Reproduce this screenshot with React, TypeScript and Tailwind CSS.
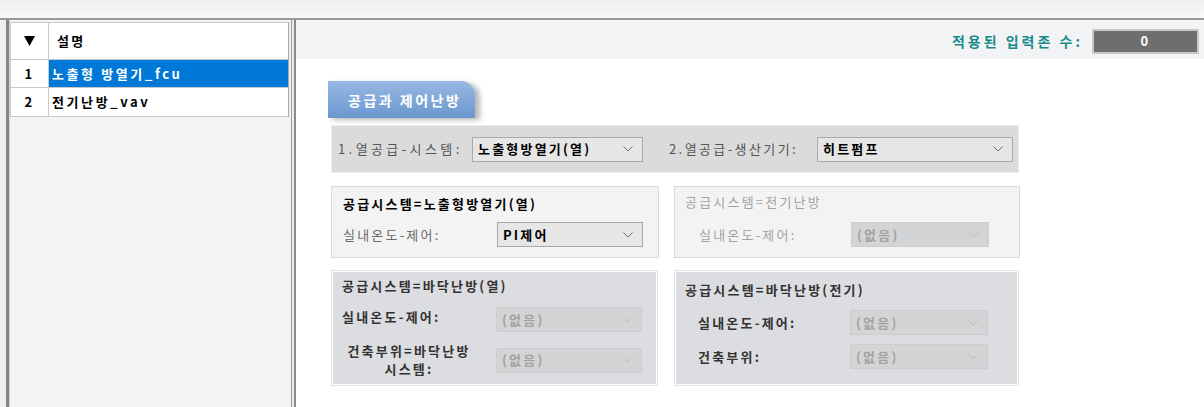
import clsx from 'clsx';

function Chevron({ disabled }: { disabled?: boolean }) {
    return (
        <svg width="10" height="6" viewBox="0 0 10 6" className="shrink-0">
            <polyline
                points="0.5,0.5 5,5 9.5,0.5"
                fill="none"
                stroke={disabled ? '#bdbdbd' : '#6f6f6f'}
                strokeWidth="1"
            />
        </svg>
    );
}

function Combo({ value, className, disabled }: { value: string; className: string; disabled?: boolean }) {
    return (
        <div
            className={clsx(
                'flex h-[25px] shrink-0 items-center justify-between border pl-[5px] pr-[9px] font-bold',
                disabled ? 'border-[#cdcdcd] bg-[#d3d4d6] text-[#a2a2a2]' : 'border-[#a9a9a9] bg-[#e6e6e6] text-black',
                className,
            )}
        >
            <span>{value}</span>
            <Chevron disabled={disabled} />
        </div>
    );
}

function GridRow({ no, text, selected, h }: { no: string; text: string; selected?: boolean; h: string }) {
    return (
        <div className={clsx('flex border-b border-[#c9c9c9]', h)}>
            <div className="flex w-[38px] items-center justify-center border-r border-[#c9c9c9] bg-white font-bold">{no}</div>
            <div
                className={clsx(
                    'flex flex-1 items-center pl-[3px] font-bold tracking-[2.6px]',
                    selected ? 'bg-[#0078d7] text-white' : 'bg-white text-black',
                )}
            >
                {text}
            </div>
        </div>
    );
}

export default function App() {
    return (
        <div className="h-[407px] w-[1204px] overflow-hidden bg-white font-['Noto_Sans_CJK_KR',sans-serif] text-[13px] leading-[16px] tracking-[2.2px] text-black">
            {/* top strip */}
            <div className="h-[18px] bg-gradient-to-b from-[#efefef] to-[#f8f8f8]" />
            <div className="h-[2px] bg-[#999999]" />

            <div className="flex h-[387px]">
                {/* left frame */}
                <div className="w-[6px] bg-[#f0f0f0]" />
                <div className="w-[3px] bg-[#858585]" />
                <div className="w-[1px] bg-[#d4d4d4]" />

                {/* zone grid */}
                <div className="flex w-[279px] flex-col bg-[#f4f4f4] pt-[2px]">
                    <div className="flex flex-col border-l border-r border-t border-[#c9c9c9] border-r-[#a8a8a8]">
                        <div className="flex h-[37px] border-b border-[#c9c9c9]">
                            <div className="flex w-[38px] items-center justify-center border-r border-[#c9c9c9] bg-white">
                                <svg width="11" height="10" viewBox="0 0 11 10">
                                    <polygon points="0,0 11,0 5.5,10" fill="#000" />
                                </svg>
                            </div>
                            <div className="flex flex-1 items-center bg-white pl-[8px] font-bold">설명</div>
                        </div>
                        <GridRow no="1" text="노출형 방열기_fcu" selected h="h-[28px]" />
                        <GridRow no="2" text="전기난방_vav" h="h-[29px]" />
                    </div>
                </div>

                {/* splitter */}
                <div className="w-[2px] bg-[#f0f0f0]" />
                <div className="w-[1px] bg-[#9e9e9e]" />
                <div className="w-[2px] bg-[#ececec]" />
                <div className="w-[2px] bg-[#8c8c8c]" />

                {/* settings panel */}
                <div className="flex flex-1 flex-col">
                    <div className="flex h-[39px] items-center justify-end gap-[9px] bg-[#f2f3f5] pr-[5px] pt-[3px]">
                        <span className="text-[14px] font-bold tracking-[3px] text-[#198a8c]">적용된 입력존 수:</span>
                        <div className="flex h-[25px] w-[107px] items-center justify-center border-2 border-[#c8c8c8] bg-[#6e6e6e] font-bold text-white">
                            0
                        </div>
                    </div>

                    <div className="flex flex-col pl-[35px] pt-[22px]">
                        <div className="ml-[-3px] flex h-[37px] w-[147px] items-center rounded-tr-[14px] bg-gradient-to-b from-[#98b9e3] to-[#6a97cf] pl-[20px] text-[14px] font-bold tracking-[2.5px] text-white shadow-[5px_2px_5px_rgba(0,0,0,0.28)]">
                            공급과 제어난방
                        </div>

                        <div className="mt-[7px] flex h-[48px] w-[688px] items-center border border-[#ececec] bg-[#dbdbdb] pl-[6px] tracking-[3.4px] text-[#555555]">
                            <span className="w-[134px] shrink-0">1.열공급-시스템:</span>
                            <Combo value="노출형방열기(열)" className="w-[171px] tracking-[2.2px]" />
                            <span className="ml-[26px] w-[148px] shrink-0 tracking-[2.4px]">2.열공급-생산기기:</span>
                            <Combo value="히트펌프" className="w-[196px] tracking-[2.2px]" />
                        </div>

                        <div className="mt-[13px] flex gap-[15px]">
                            <div className="flex h-[72px] w-[328px] flex-col border border-[#dadada] bg-[#f3f3f3] pl-[11px] pt-[9px]">
                                <div className="font-bold">공급시스템=노출형방열기(열)</div>
                                <div className="mt-[10px] flex items-center">
                                    <span className="w-[154px] shrink-0 text-[#6a6a6a]">실내온도-제어:</span>
                                    <Combo value="PI제어" className="w-[146px]" />
                                </div>
                            </div>
                            <div className="flex h-[72px] w-[346px] flex-col border border-[#dadada] bg-[#f3f3f3] pl-[10px] pt-[7px] text-[#a3a3a3]">
                                <div>공급시스템=전기난방</div>
                                <div className="mt-[12px] flex items-center">
                                    <span className="ml-[14px] w-[152px] shrink-0">실내온도-제어:</span>
                                    <Combo value="(없음)" className="w-[138px]" disabled />
                                </div>
                            </div>
                        </div>

                        <div className="mt-[12px] flex gap-[16px]">
                            <div className="flex h-[116px] w-[327px] flex-col border border-[#e2e2e2] bg-[#dcdde0] pl-[10px] pt-[7px] text-[#333333] shadow-[inset_0_0_0_1px_#ffffff]">
                                <div className="font-semibold">공급시스템=바닥난방(열)</div>
                                <div className="mt-[13px] flex items-center">
                                    <span className="mb-[6px] w-[154px] shrink-0 font-semibold">실내온도-제어:</span>
                                    <Combo value="(없음)" className="w-[146px]" disabled />
                                </div>
                                <div className="mt-[10px] flex items-center">
                                    <div className="w-[154px] shrink-0">
                                        <p className="w-[134px] text-center font-semibold leading-[18px]">
                                            건축부위=바닥난방
                                            <br />
                                            시스템:
                                        </p>
                                    </div>
                                    <Combo value="(없음)" className="w-[146px]" disabled />
                                </div>
                            </div>
                            <div className="flex h-[116px] w-[345px] flex-col border border-[#e2e2e2] bg-[#dcdde0] pl-[10px] pt-[11px] text-[#333333] shadow-[inset_0_0_0_1px_#ffffff]">
                                <div className="font-semibold">공급시스템=바닥난방(전기)</div>
                                <div className="mt-[12px] flex items-center">
                                    <span className="ml-[13px] w-[152px] shrink-0 font-semibold">실내온도-제어:</span>
                                    <Combo value="(없음)" className="w-[138px]" disabled />
                                </div>
                                <div className="mt-[9px] flex items-center">
                                    <span className="ml-[13px] w-[152px] shrink-0 font-semibold">건축부위:</span>
                                    <Combo value="(없음)" className="w-[138px]" disabled />
                                </div>
                            </div>
                        </div>
                    </div>
                </div>
            </div>
        </div>
    );
}
